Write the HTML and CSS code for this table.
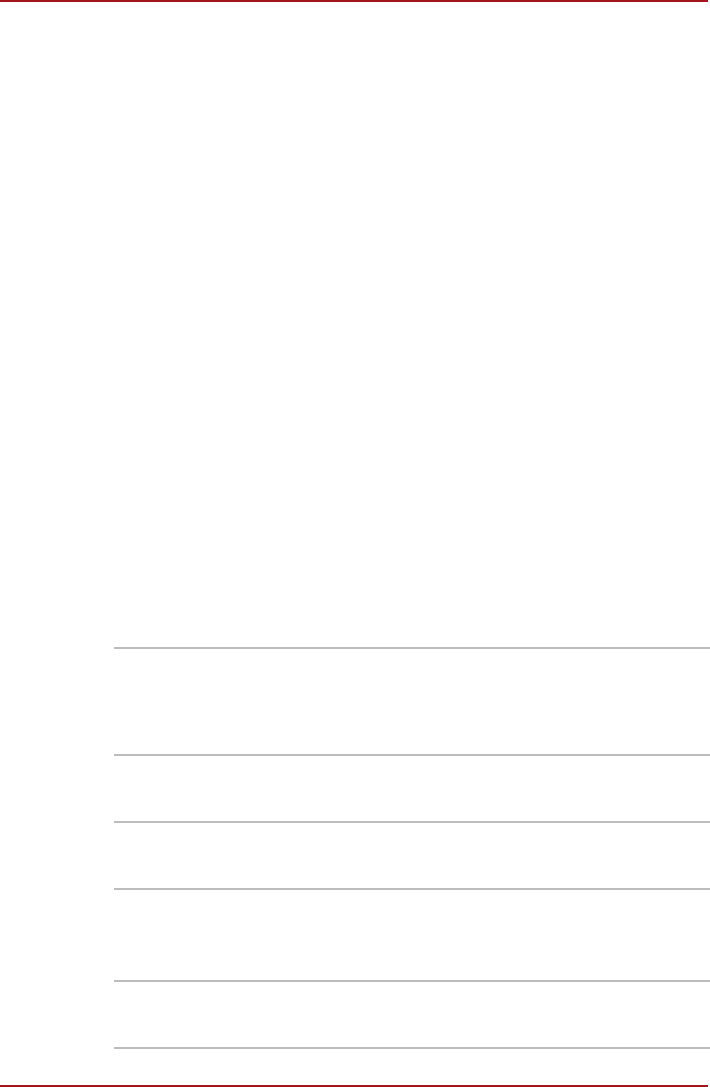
FILE: index.html
```html
<!DOCTYPE html>
<html lang="en" dir="ltr">

<head>
  <meta charset="utf-8">
  <title>Page</title>
  <link rel="stylesheet" href="styles.css">
  <meta name="viewport" content="width=device-width, initial-scale=1.0">
</head>

<body>
  <div class="page">
    <header class="top-rule"></header>
    <main class="content">
      <div class="spec-table">
        <div class="row tall"></div>
        <div class="row"></div>
        <div class="row"></div>
        <div class="row mid"></div>
        <div class="row"></div>
      </div>
    </main>
    <footer class="bottom-rule"></footer>
  </div>
</body>

</html>
```

FILE: styles.css
```css
* {
  margin: 0;
  padding: 0;
  box-sizing: border-box;
  font-family: 'Liberation Sans', Arial, sans-serif;
}

body {
  background: #fff;
}

.page {
  display: flex;
  flex-direction: column;
  height: 1087px;
}

.top-rule {
  width: 708px;
  height: 2px;
  background: #a3151d;
}

.content {
  flex: 1;
  padding: 645px 0 0 114px;
}

.spec-table {
  border-bottom: 2px solid #bdbdbd;
}

.row {
  height: 67px;
  border-top: 2px solid #bdbdbd;
}

.row.tall {
  height: 107px;
}

.row.mid {
  height: 92px;
}

.bottom-rule {
  width: 708px;
  height: 2px;
  background: #a3151d;
}
```
